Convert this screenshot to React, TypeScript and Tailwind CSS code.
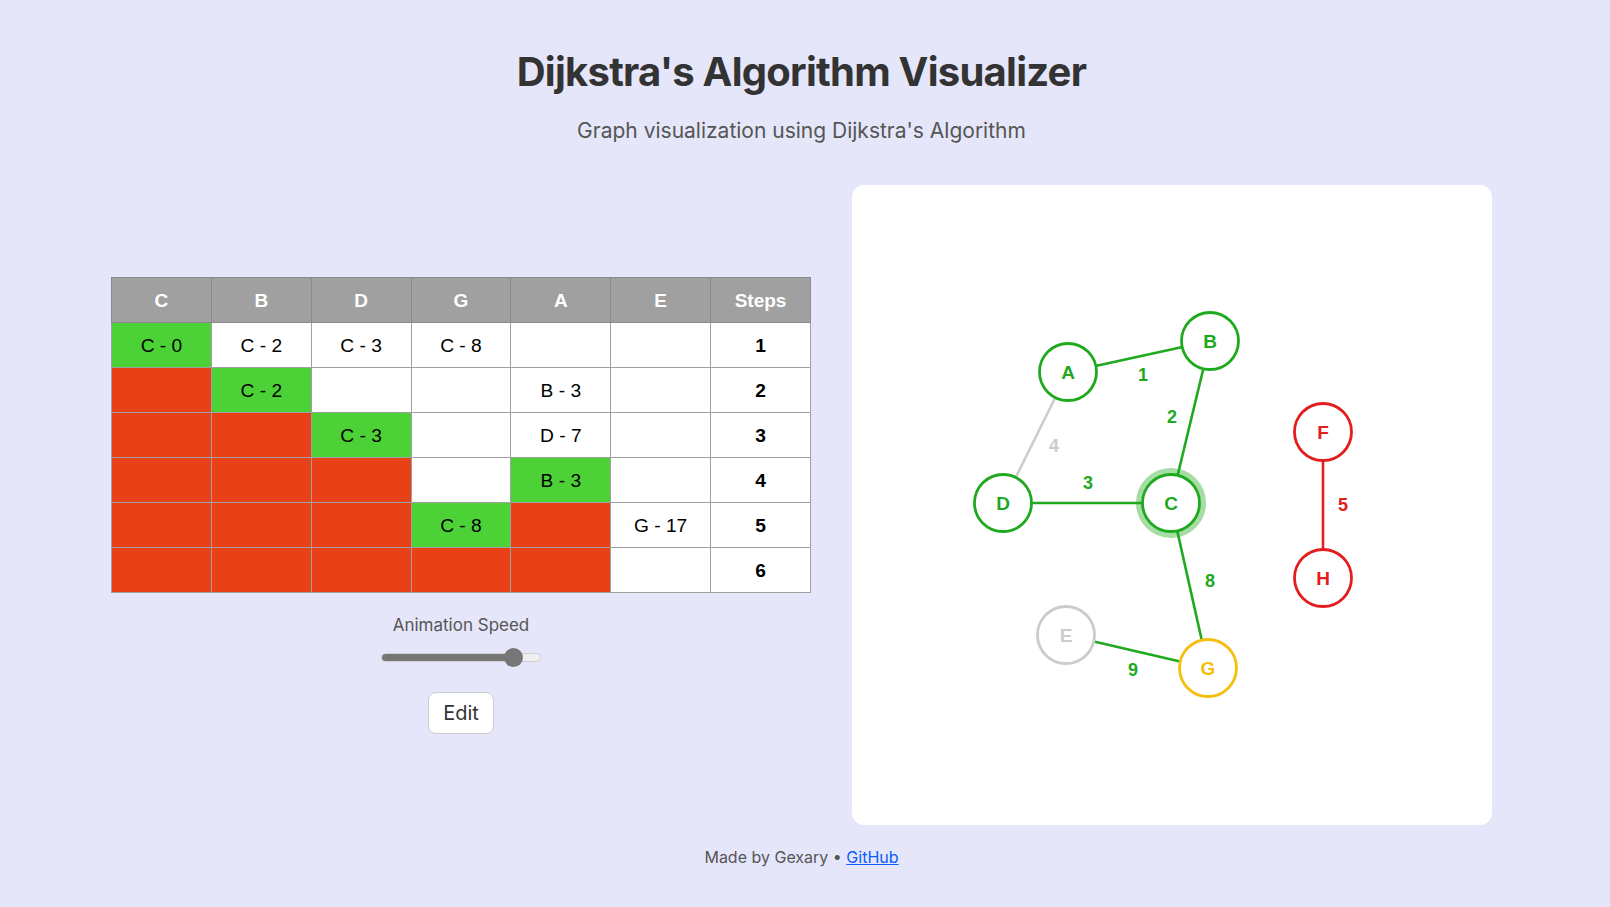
import React from "react";

type Cell = { t?: string; c?: "g" | "r" | "w" };

const headers = ["C", "B", "D", "G", "A", "E"];
const rows: Cell[][] = [
  [{ t: "C - 0", c: "g" }, { t: "C - 2" }, { t: "C - 3" }, { t: "C - 8" }, {}, {}],
  [{ c: "r" }, { t: "C - 2", c: "g" }, {}, {}, { t: "B - 3" }, {}],
  [{ c: "r" }, { c: "r" }, { t: "C - 3", c: "g" }, {}, { t: "D - 7" }, {}],
  [{ c: "r" }, { c: "r" }, { c: "r" }, {}, { t: "B - 3", c: "g" }, {}],
  [{ c: "r" }, { c: "r" }, { c: "r" }, { t: "C - 8", c: "g" }, { c: "r" }, { t: "G - 17" }],
  [{ c: "r" }, { c: "r" }, { c: "r" }, { c: "r" }, { c: "r" }, {}],
];

const GREEN = "#1fa91f";
const RED = "#e31e1e";
const GRAY = "#cccccc";
const YELLOW = "#f5be0b";

const nodes = [
  { id: "A", x: 216, y: 187, col: GREEN },
  { id: "B", x: 358, y: 156, col: GREEN },
  { id: "D", x: 151, y: 318, col: GREEN },
  { id: "C", x: 319, y: 318, col: GREEN },
  { id: "E", x: 214, y: 450, col: GRAY },
  { id: "G", x: 356, y: 483, col: YELLOW },
  { id: "F", x: 471, y: 247, col: RED },
  { id: "H", x: 471, y: 393, col: RED },
];
const pos: Record<string, { x: number; y: number }> = Object.fromEntries(
  nodes.map((n) => [n.id, { x: n.x, y: n.y }])
);
const edges = [
  { a: "A", b: "B", w: "1", col: GREEN, lx: 291, ly: 190 },
  { a: "B", b: "C", w: "2", col: GREEN, lx: 320, ly: 232 },
  { a: "A", b: "D", w: "4", col: GRAY, lx: 202, ly: 261 },
  { a: "D", b: "C", w: "3", col: GREEN, lx: 236, ly: 298 },
  { a: "C", b: "G", w: "8", col: GREEN, lx: 358, ly: 396 },
  { a: "E", b: "G", w: "9", col: GREEN, lx: 281, ly: 485 },
  { a: "F", b: "H", w: "5", col: RED, lx: 491, ly: 320 },
];

function Graph() {
  return (
    <svg width="640" height="640" viewBox="0 0 640 640" className="block">
      {edges.map((e, i) => (
        <line
          key={i}
          x1={pos[e.a].x}
          y1={pos[e.a].y}
          x2={pos[e.b].x}
          y2={pos[e.b].y}
          stroke={e.col}
          strokeWidth={2.6}
        />
      ))}
      {edges.map((e, i) => (
        <text
          key={"l" + i}
          x={e.lx}
          y={e.ly}
          fill={e.col}
          fontFamily="'Liberation Sans', Arial, sans-serif"
          fontWeight={700}
          fontSize={18}
          textAnchor="middle"
          dominantBaseline="central"
        >
          {e.w}
        </text>
      ))}
      <circle cx={pos.C.x} cy={pos.C.y} r={32} fill="none" stroke={GREEN} strokeOpacity={0.4} strokeWidth={6} />
      {nodes.map((n) => (
        <g key={n.id}>
          <circle cx={n.x} cy={n.y} r={28.5} fill="#ffffff" stroke={n.col} strokeWidth={2.8} />
          <text
            x={n.x}
            y={n.y}
            fill={n.col}
            fontFamily="'Liberation Sans', Arial, sans-serif"
            fontWeight={700}
            fontSize={19}
            textAnchor="middle"
            dominantBaseline="central"
          >
            {n.id}
          </text>
        </g>
      ))}
    </svg>
  );
}

export default function App() {
  return (
    <div
      className="min-h-[907px] w-full bg-[#e6e6fa] text-[#333333] pr-[7px]"
      style={{ fontFamily: "Inter, 'Noto Sans', sans-serif" }}
    >
      <div className="flex flex-col items-center pt-[48px]">
        <h1 className="text-[40px] leading-[48px] font-bold text-[#333333] tracking-[-0.75px]">
          Dijkstra's Algorithm Visualizer
        </h1>
        <p className="mt-[21px] text-[21px] leading-[28px] text-[#555555]">
          Graph visualization using Dijkstra's Algorithm
        </p>
      </div>

      <div className="mt-[40px] flex justify-center items-center">
        <div className="w-[700px] mr-[41px] flex flex-col items-center">
          <table
            className="w-[700px] border-collapse border border-[#808080] table-fixed"
            style={{ fontFamily: "'Liberation Sans', Arial, sans-serif" }}
          >
            <thead>
              <tr className="h-[45px] bg-[#a0a0a0]">
                {[...headers, "Steps"].map((h) => (
                  <th
                    key={h}
                    className="border border-[#8a8a8a] text-white font-bold text-[19px] px-0 pb-0 pt-[4px] text-center"
                  >
                    {h}
                  </th>
                ))}
              </tr>
            </thead>
            <tbody>
              {rows.map((r, i) => (
                <tr key={i} className="h-[45px]">
                  {r.map((c, j) => (
                    <td
                      key={j}
                      className={
                        "border border-[#a0a0a0] text-center text-[19.2px] text-black px-0 pb-0 pt-[4px] " +
                        (c.c === "g" ? "bg-[#4cd137]" : c.c === "r" ? "bg-[#e84118]" : "bg-white")
                      }
                    >
                      {c.t ?? ""}
                    </td>
                  ))}
                  <td className="border border-[#a0a0a0] bg-white text-center text-[19.2px] font-bold text-black px-0 pb-0 pt-[4px]">
                    {i + 1}
                  </td>
                </tr>
              ))}
            </tbody>
          </table>

          <div className="mt-[21px] text-[17px] leading-[22px] text-[#555555]">Animation Speed</div>
          <div className="mt-[12px] relative w-[160px] h-[19px] flex items-center">
            <div className="w-full h-[9px] rounded-full bg-[#efefef] border border-[#d0d0d0] overflow-hidden">
              <div className="h-full w-[134px] bg-[#767676]" />
            </div>
            <div className="absolute left-[123px] top-0 w-[19px] h-[19px] rounded-full bg-[#767676]" />
          </div>
          <button className="mt-[25px] h-[42px] px-[14px] rounded-[8px] bg-white border border-[#cccccc] text-[20px] text-[#333333]">
            Edit
          </button>
        </div>
        <div className="w-[640px] h-[640px] bg-white rounded-[12px] overflow-hidden">
          <Graph />
        </div>
      </div>

      <div className="mt-[20px] text-center text-[16px] leading-[24px] text-[#555555]">
        Made by Gexary •{" "}
        <a href="#" className="text-[#0a5cff] underline">
          GitHub
        </a>
      </div>
    </div>
  );
}
